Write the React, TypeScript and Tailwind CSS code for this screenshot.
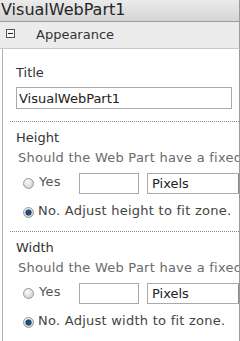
import React from 'react';

function Radio({ checked }: { checked?: boolean }) {
  return (
    <svg width="11" height="11" viewBox="0 0 11 11" className="shrink-0">
      <defs>
        <radialGradient id={checked ? 'rc' : 'ru'} cx="40%" cy="35%" r="70%">
          <stop offset="0%" stopColor="#ffffff" />
          <stop offset="100%" stopColor="#c9c9c9" />
        </radialGradient>
      </defs>
      <circle cx="5.5" cy="5.5" r="5" fill={`url(#${checked ? 'rc' : 'ru'})`} stroke="#9c9c9c" strokeWidth="1" />
      {checked && <circle cx="5.5" cy="5.5" r="2.8" fill="#1d4f7a" stroke="#0f2f4d" strokeWidth="0.6" />}
    </svg>
  );
}

function SizeSection({ label, noText }: { label: string; noText: string }) {
  return (
    <div className="border-t border-dotted border-[#6f8caf] ml-[7px] pt-[8px] pb-[13px]">
      <div className="pl-[6px] text-[#333] leading-[15px]">{label}</div>
      <div className="pl-[8px] mt-[5px] whitespace-nowrap text-[#6a6a6a] leading-[15px] tracking-[0.25px]">
        Should the Web Part have a fixed height?
      </div>
      <div className="flex items-center mt-[8px] pl-[13px] whitespace-nowrap">
        <Radio />
        <span className="ml-[5px] w-[40px] shrink-0 text-[#555] leading-[15px] -mt-[4px] tracking-[0.25px]">Yes</span>
        <div className="w-[60px] h-[21px] border border-[#a9a9a9] bg-white shrink-0" />
        <div className="ml-[8px] w-[110px] h-[21px] border border-[#a9a9a9] bg-white shrink-0 flex items-center pl-[4px] text-[#222]">
          <span className="flex-1 leading-[15px]">Pixels</span>
          <span className="w-[18px] h-[19px] border-l border-[#8a8a8a] bg-[#f0f0f0]" />
        </div>
      </div>
      <div className="flex items-center mt-[12px] pl-[13px] whitespace-nowrap">
        <Radio checked />
        <span className="ml-[4px] text-[#444] leading-[15px] -mt-[3px] tracking-[0.25px]">{noText}</span>
      </div>
    </div>
  );
}

export default function App() {
  return (
    <div className="w-[240px] h-[341px] overflow-hidden bg-white font-['DejaVu_Sans',sans-serif] text-[13px]">
      <div className="h-[22px] border-b border-r border-[#9b9b9b] bg-gradient-to-b from-[#ebebeb] to-[#d4d4d4] text-[16px] leading-[20px] text-[#262626] pl-px">
        VisualWebPart1
      </div>
      <div className="h-[27px] bg-[#ececec] border-b border-[#c8c8c8] flex items-center pl-[6px] border-r border-r-[#9b9b9b]">
        <span className="w-[9px] h-[9px] border border-[#555] bg-[#f7f7f7] flex items-center justify-center mb-[3px]">
          <span className="w-[5px] h-px bg-[#222]" />
        </span>
        <span className="ml-[21px] text-[#333] leading-[15px] mb-[2px]">Appearance</span>
      </div>
      <div className="ml-[2px] h-[292px] border-l border-r border-[#b0b0b0] border-r-[#9b9b9b] overflow-hidden">
        <div className="pl-[13px] pt-[16px] text-[#333] leading-[15px]">Title</div>
        <div className="ml-[13px] mt-[7px] w-[216px] h-[22px] border border-[#a9a9a9] bg-white flex items-center pl-[2px] text-[#222] leading-[15px]">
          VisualWebPart1
        </div>
        <div className="mt-[12px]">
          <SizeSection label="Height" noText="No. Adjust height to fit zone." />
          <SizeSection label="Width" noText="No. Adjust width to fit zone." />
        </div>
      </div>
    </div>
  );
}
